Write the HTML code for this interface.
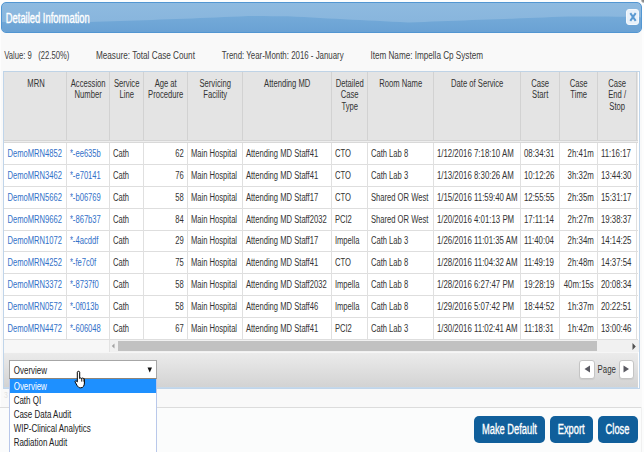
<!DOCTYPE html>
<html><head><meta charset="utf-8"><style>
html,body{margin:0;padding:0;}
body{width:644px;height:452px;overflow:hidden;position:relative;font-family:'Liberation Sans', sans-serif;background:#f9f9f9}
div{position:absolute;box-sizing:content-box}
.t{white-space:nowrap}
</style></head><body>
<div style="left:0px;top:0px;width:644px;height:452px;background:#fdfdfd"></div>
<div style="left:1px;top:20px;width:640.5px;height:387px;background:#f9f9f9"></div>
<div style="left:0px;top:408px;width:644px;height:44px;background:#fbfcfc"></div>
<div style="left:0px;top:407px;width:641px;height:1px;background:#dcdcdc"></div>
<div style="left:640px;top:-4px;width:8px;height:8px;background:radial-gradient(circle at 50% 50%,rgba(110,110,110,.9) 0,rgba(120,120,120,.8) 2px,rgba(150,150,150,0) 3.5px)"></div>
<div style="left:639px;top:447px;width:10px;height:10px;background:radial-gradient(circle at 100% 100%,rgba(120,120,120,.8) 0,rgba(120,120,120,.6) 2px,rgba(150,150,150,0) 4px)"></div>
<div style="left:641px;top:407px;width:1px;height:45px;background:#f0f0f0"></div>
<div style="left:1px;top:2px;width:639px;height:29px;border:1px solid #5296d2;border-radius:5px;overflow:hidden;background:linear-gradient(#8ebae0,#85b3db)"><svg style="position:absolute;left:0;top:0" width="639" height="29"><defs><linearGradient id="gb" x1="0" y1="0" x2="0" y2="1"><stop offset="0" stop-color="#74aad8"/><stop offset="1" stop-color="#6aa2d4"/></linearGradient></defs><path d="M-2 19.00 L-2 19.00 L6 19.00 L14 19.00 L22 19.00 L30 19.00 L38 19.00 L46 19.00 L54 19.00 L62 19.00 L70 19.00 L78 19.00 L86 19.00 L94 18.79 L102 18.51 L110 18.23 L118 17.95 L126 17.67 L134 17.41 L142 17.14 L150 16.89 L158 16.62 L166 16.37 L174 16.05 L182 15.72 L190 15.39 L198 15.06 L206 14.73 L214 14.40 L222 14.07 L230 13.74 L238 13.41 L246 13.08 L254 13.05 L262 13.11 L270 13.16 L278 13.23 L286 13.29 L294 13.63 L302 14.07 L310 14.51 L318 14.95 L326 15.39 L334 15.81 L342 16.22 L350 16.63 L358 17.04 L366 17.45 L374 17.86 L382 18.27 L390 18.68 L398 19.09 L406 19.50 L414 19.32 L422 18.95 L430 18.57 L438 18.20 L446 17.93 L454 17.66 L462 17.38 L470 17.11 L478 16.84 L486 16.57 L494 16.27 L502 15.96 L510 15.65 L518 15.34 L526 15.03 L534 14.72 L542 14.41 L550 14.10 L558 13.79 L566 13.48 L574 13.42 L582 13.45 L590 13.47 L598 13.50 L606 13.59 L614 13.68 L622 13.77 L630 13.86 L638 13.95 L660 29 L-2 29Z" fill="url(#gb)"/></svg></div>
<div class="t" style="left:0;text-align:left;top:8.82px;font-size:13.8px;line-height:20px;color:#fff;transform:translateX(5.80px) scaleX(0.68);transform-origin:0 0;-webkit-text-stroke:0.35px #fff">Detailed Information</div>
<div style="left:626px;top:9px;width:11px;height:14px;border:1px solid #f4f8fc;border-radius:3px;background:#e8f1fa"></div>
<svg style="position:absolute;left:628.5px;top:12px" width="8" height="10" viewBox="0 0 8 10"><path d="M1.3 1.2L6.7 8.8M6.7 1.2L1.3 8.8" stroke="#5b9ad2" stroke-width="2"/></svg>
<div class="t" style="left:0;text-align:left;top:45.63px;font-size:10.3px;line-height:20px;color:#3c3c3c;transform:translateX(4.20px) scaleX(0.745);transform-origin:0 0;">Value: 9</div>
<div class="t" style="left:0;text-align:left;top:45.63px;font-size:10.3px;line-height:20px;color:#3c3c3c;transform:translateX(38.30px) scaleX(0.745);transform-origin:0 0;">(22.50%)</div>
<div class="t" style="left:0;text-align:left;top:45.63px;font-size:10.3px;line-height:20px;color:#3c3c3c;transform:translateX(95.90px) scaleX(0.795);transform-origin:0 0;">Measure: Total Case Count</div>
<div class="t" style="left:0;text-align:left;top:45.63px;font-size:10.3px;line-height:20px;color:#3c3c3c;transform:translateX(221.80px) scaleX(0.765);transform-origin:0 0;">Trend: Year-Month: 2016 - January</div>
<div class="t" style="left:0;text-align:left;top:45.63px;font-size:10.3px;line-height:20px;color:#3c3c3c;transform:translateX(370.40px) scaleX(0.79);transform-origin:0 0;">Item Name: Impella Cp System</div>
<div style="left:3px;top:71px;width:635px;height:316px;border:1px solid #c0d5ea;border-top-color:#bfd3e6;background:#fff"></div>
<div style="left:4px;top:72px;width:634px;height:68px;background:#e4e4e4"></div>
<div style="left:66px;top:72px;width:1px;height:68px;background:#d2d2d2"></div>
<div style="left:109px;top:72px;width:1px;height:68px;background:#d2d2d2"></div>
<div style="left:143px;top:72px;width:1px;height:68px;background:#d2d2d2"></div>
<div style="left:187px;top:72px;width:1px;height:68px;background:#d2d2d2"></div>
<div style="left:242px;top:72px;width:1px;height:68px;background:#d2d2d2"></div>
<div style="left:331px;top:72px;width:1px;height:68px;background:#d2d2d2"></div>
<div style="left:367px;top:72px;width:1px;height:68px;background:#d2d2d2"></div>
<div style="left:433px;top:72px;width:1px;height:68px;background:#d2d2d2"></div>
<div style="left:520px;top:72px;width:1px;height:68px;background:#d2d2d2"></div>
<div style="left:559px;top:72px;width:1px;height:68px;background:#d2d2d2"></div>
<div style="left:597px;top:72px;width:1px;height:68px;background:#d2d2d2"></div>
<div style="left:636px;top:72px;width:1px;height:68px;background:#d2d2d2"></div>
<div style="left:4px;top:140px;width:634px;height:1px;background:#d5d5d5"></div>
<div style="left:4px;top:141px;width:634px;height:1px;background:#eeeeee"></div>
<div style="left:4px;top:142px;width:634px;height:1px;background:#d9d9d9"></div>
<div style="left:4px;top:164px;width:634px;height:1px;background:#dedede"></div>
<div style="left:4px;top:186px;width:634px;height:1px;background:#dedede"></div>
<div style="left:4px;top:208px;width:634px;height:1px;background:#dedede"></div>
<div style="left:4px;top:230px;width:634px;height:1px;background:#dedede"></div>
<div style="left:4px;top:251px;width:634px;height:1px;background:#dedede"></div>
<div style="left:4px;top:273px;width:634px;height:1px;background:#dedede"></div>
<div style="left:4px;top:295px;width:634px;height:1px;background:#dedede"></div>
<div style="left:4px;top:317px;width:634px;height:1px;background:#dedede"></div>
<div style="left:4px;top:339px;width:634px;height:1px;background:#dedede"></div>
<div style="left:66px;top:143px;width:1px;height:196px;background:#e0e0e0"></div>
<div style="left:109px;top:143px;width:1px;height:196px;background:#e0e0e0"></div>
<div style="left:143px;top:143px;width:1px;height:196px;background:#e0e0e0"></div>
<div style="left:187px;top:143px;width:1px;height:196px;background:#e0e0e0"></div>
<div style="left:242px;top:143px;width:1px;height:196px;background:#e0e0e0"></div>
<div style="left:331px;top:143px;width:1px;height:196px;background:#e0e0e0"></div>
<div style="left:367px;top:143px;width:1px;height:196px;background:#e0e0e0"></div>
<div style="left:433px;top:143px;width:1px;height:196px;background:#e0e0e0"></div>
<div style="left:520px;top:143px;width:1px;height:196px;background:#e0e0e0"></div>
<div style="left:559px;top:143px;width:1px;height:196px;background:#e0e0e0"></div>
<div style="left:597px;top:143px;width:1px;height:196px;background:#e0e0e0"></div>
<div style="left:636px;top:143px;width:1px;height:196px;background:#e0e0e0"></div>
<div class="t" style="left:0;width:400px;text-align:center;top:73.53px;font-size:10px;line-height:20px;color:#333;transform:translateX(-164.00px) scaleX(0.765);transform-origin:50% 0;">MRN</div>
<div class="t" style="left:0;width:400px;text-align:center;top:73.53px;font-size:10px;line-height:20px;color:#333;transform:translateX(-111.80px) scaleX(0.765);transform-origin:50% 0;">Accession</div>
<div class="t" style="left:0;width:400px;text-align:center;top:85.23px;font-size:10px;line-height:20px;color:#333;transform:translateX(-111.80px) scaleX(0.765);transform-origin:50% 0;">Number</div>
<div class="t" style="left:0;width:400px;text-align:center;top:73.53px;font-size:10px;line-height:20px;color:#333;transform:translateX(-73.30px) scaleX(0.765);transform-origin:50% 0;">Service</div>
<div class="t" style="left:0;width:400px;text-align:center;top:85.23px;font-size:10px;line-height:20px;color:#333;transform:translateX(-73.30px) scaleX(0.765);transform-origin:50% 0;">Line</div>
<div class="t" style="left:0;width:400px;text-align:center;top:73.53px;font-size:10px;line-height:20px;color:#333;transform:translateX(-34.30px) scaleX(0.765);transform-origin:50% 0;">Age at</div>
<div class="t" style="left:0;width:400px;text-align:center;top:85.23px;font-size:10px;line-height:20px;color:#333;transform:translateX(-34.30px) scaleX(0.765);transform-origin:50% 0;">Procedure</div>
<div class="t" style="left:0;width:400px;text-align:center;top:73.53px;font-size:10px;line-height:20px;color:#333;transform:translateX(15.20px) scaleX(0.765);transform-origin:50% 0;">Servicing</div>
<div class="t" style="left:0;width:400px;text-align:center;top:85.23px;font-size:10px;line-height:20px;color:#333;transform:translateX(15.20px) scaleX(0.765);transform-origin:50% 0;">Facility</div>
<div class="t" style="left:0;width:400px;text-align:center;top:73.53px;font-size:10px;line-height:20px;color:#333;transform:translateX(87.20px) scaleX(0.765);transform-origin:50% 0;">Attending MD</div>
<div class="t" style="left:0;width:400px;text-align:center;top:73.53px;font-size:10px;line-height:20px;color:#333;transform:translateX(149.70px) scaleX(0.765);transform-origin:50% 0;">Detailed</div>
<div class="t" style="left:0;width:400px;text-align:center;top:85.23px;font-size:10px;line-height:20px;color:#333;transform:translateX(149.70px) scaleX(0.765);transform-origin:50% 0;">Case</div>
<div class="t" style="left:0;width:400px;text-align:center;top:96.94px;font-size:10px;line-height:20px;color:#333;transform:translateX(149.70px) scaleX(0.765);transform-origin:50% 0;">Type</div>
<div class="t" style="left:0;width:400px;text-align:center;top:73.53px;font-size:10px;line-height:20px;color:#333;transform:translateX(200.70px) scaleX(0.765);transform-origin:50% 0;">Room Name</div>
<div class="t" style="left:0;width:400px;text-align:center;top:73.53px;font-size:10px;line-height:20px;color:#333;transform:translateX(277.20px) scaleX(0.765);transform-origin:50% 0;">Date of Service</div>
<div class="t" style="left:0;width:400px;text-align:center;top:73.53px;font-size:10px;line-height:20px;color:#333;transform:translateX(340.20px) scaleX(0.765);transform-origin:50% 0;">Case</div>
<div class="t" style="left:0;width:400px;text-align:center;top:85.23px;font-size:10px;line-height:20px;color:#333;transform:translateX(340.20px) scaleX(0.765);transform-origin:50% 0;">Start</div>
<div class="t" style="left:0;width:400px;text-align:center;top:73.53px;font-size:10px;line-height:20px;color:#333;transform:translateX(378.70px) scaleX(0.765);transform-origin:50% 0;">Case</div>
<div class="t" style="left:0;width:400px;text-align:center;top:85.23px;font-size:10px;line-height:20px;color:#333;transform:translateX(378.70px) scaleX(0.765);transform-origin:50% 0;">Time</div>
<div class="t" style="left:0;width:400px;text-align:center;top:73.53px;font-size:10px;line-height:20px;color:#333;transform:translateX(417.20px) scaleX(0.765);transform-origin:50% 0;">Case</div>
<div class="t" style="left:0;width:400px;text-align:center;top:85.23px;font-size:10px;line-height:20px;color:#333;transform:translateX(417.20px) scaleX(0.765);transform-origin:50% 0;">End /</div>
<div class="t" style="left:0;width:400px;text-align:center;top:96.94px;font-size:10px;line-height:20px;color:#333;transform:translateX(417.20px) scaleX(0.765);transform-origin:50% 0;">Stop</div>
<div class="t" style="left:0;text-align:left;top:143.63px;font-size:10px;line-height:20px;color:#3270c8;transform:translateX(7.40px) scaleX(0.762);transform-origin:0 0;">DemoMRN4852</div>
<div class="t" style="left:0;text-align:left;top:143.63px;font-size:10px;line-height:20px;color:#3270c8;transform:translateX(69.90px) scaleX(0.762);transform-origin:0 0;">*-ee635b</div>
<div class="t" style="left:0;text-align:left;top:143.63px;font-size:10px;line-height:20px;color:#333;transform:translateX(112.90px) scaleX(0.762);transform-origin:0 0;">Cath</div>
<div class="t" style="left:0;width:400px;text-align:right;top:143.63px;font-size:10px;line-height:20px;color:#333;transform:translateX(-216.20px) scaleX(0.762);transform-origin:100% 0;">62</div>
<div class="t" style="left:0;text-align:left;top:143.63px;font-size:10px;line-height:20px;color:#333;transform:translateX(190.90px) scaleX(0.762);transform-origin:0 0;">Main Hospital</div>
<div class="t" style="left:0;text-align:left;top:143.63px;font-size:10px;line-height:20px;color:#333;transform:translateX(245.90px) scaleX(0.762);transform-origin:0 0;">Attending MD Staff41</div>
<div class="t" style="left:0;text-align:left;top:143.63px;font-size:10px;line-height:20px;color:#333;transform:translateX(334.90px) scaleX(0.762);transform-origin:0 0;">CTO</div>
<div class="t" style="left:0;text-align:left;top:143.63px;font-size:10px;line-height:20px;color:#333;transform:translateX(370.90px) scaleX(0.762);transform-origin:0 0;">Cath Lab 8</div>
<div class="t" style="left:0;text-align:left;top:143.63px;font-size:10px;line-height:20px;color:#333;transform:translateX(436.90px) scaleX(0.785);transform-origin:0 0;">1/12/2016 7:18:10 AM</div>
<div class="t" style="left:0;text-align:left;top:143.63px;font-size:10px;line-height:20px;color:#333;transform:translateX(523.90px) scaleX(0.785);transform-origin:0 0;">08:34:31</div>
<div class="t" style="left:0;width:400px;text-align:right;top:143.63px;font-size:10px;line-height:20px;color:#333;transform:translateX(193.80px) scaleX(0.785);transform-origin:100% 0;">2h:41m</div>
<div class="t" style="left:0;text-align:left;top:143.63px;font-size:10px;line-height:20px;color:#333;transform:translateX(600.90px) scaleX(0.785);transform-origin:0 0;">11:16:17</div>
<div class="t" style="left:0;text-align:left;top:165.63px;font-size:10px;line-height:20px;color:#3270c8;transform:translateX(7.40px) scaleX(0.762);transform-origin:0 0;">DemoMRN3462</div>
<div class="t" style="left:0;text-align:left;top:165.63px;font-size:10px;line-height:20px;color:#3270c8;transform:translateX(69.90px) scaleX(0.762);transform-origin:0 0;">*-e70141</div>
<div class="t" style="left:0;text-align:left;top:165.63px;font-size:10px;line-height:20px;color:#333;transform:translateX(112.90px) scaleX(0.762);transform-origin:0 0;">Cath</div>
<div class="t" style="left:0;width:400px;text-align:right;top:165.63px;font-size:10px;line-height:20px;color:#333;transform:translateX(-216.20px) scaleX(0.762);transform-origin:100% 0;">76</div>
<div class="t" style="left:0;text-align:left;top:165.63px;font-size:10px;line-height:20px;color:#333;transform:translateX(190.90px) scaleX(0.762);transform-origin:0 0;">Main Hospital</div>
<div class="t" style="left:0;text-align:left;top:165.63px;font-size:10px;line-height:20px;color:#333;transform:translateX(245.90px) scaleX(0.762);transform-origin:0 0;">Attending MD Staff41</div>
<div class="t" style="left:0;text-align:left;top:165.63px;font-size:10px;line-height:20px;color:#333;transform:translateX(334.90px) scaleX(0.762);transform-origin:0 0;">CTO</div>
<div class="t" style="left:0;text-align:left;top:165.63px;font-size:10px;line-height:20px;color:#333;transform:translateX(370.90px) scaleX(0.762);transform-origin:0 0;">Cath Lab 3</div>
<div class="t" style="left:0;text-align:left;top:165.63px;font-size:10px;line-height:20px;color:#333;transform:translateX(436.90px) scaleX(0.785);transform-origin:0 0;">1/13/2016 8:30:26 AM</div>
<div class="t" style="left:0;text-align:left;top:165.63px;font-size:10px;line-height:20px;color:#333;transform:translateX(523.90px) scaleX(0.785);transform-origin:0 0;">10:12:26</div>
<div class="t" style="left:0;width:400px;text-align:right;top:165.63px;font-size:10px;line-height:20px;color:#333;transform:translateX(193.80px) scaleX(0.785);transform-origin:100% 0;">3h:32m</div>
<div class="t" style="left:0;text-align:left;top:165.63px;font-size:10px;line-height:20px;color:#333;transform:translateX(600.90px) scaleX(0.785);transform-origin:0 0;">13:44:30</div>
<div class="t" style="left:0;text-align:left;top:187.63px;font-size:10px;line-height:20px;color:#3270c8;transform:translateX(7.40px) scaleX(0.762);transform-origin:0 0;">DemoMRN5662</div>
<div class="t" style="left:0;text-align:left;top:187.63px;font-size:10px;line-height:20px;color:#3270c8;transform:translateX(69.90px) scaleX(0.762);transform-origin:0 0;">*-b06769</div>
<div class="t" style="left:0;text-align:left;top:187.63px;font-size:10px;line-height:20px;color:#333;transform:translateX(112.90px) scaleX(0.762);transform-origin:0 0;">Cath</div>
<div class="t" style="left:0;width:400px;text-align:right;top:187.63px;font-size:10px;line-height:20px;color:#333;transform:translateX(-216.20px) scaleX(0.762);transform-origin:100% 0;">58</div>
<div class="t" style="left:0;text-align:left;top:187.63px;font-size:10px;line-height:20px;color:#333;transform:translateX(190.90px) scaleX(0.762);transform-origin:0 0;">Main Hospital</div>
<div class="t" style="left:0;text-align:left;top:187.63px;font-size:10px;line-height:20px;color:#333;transform:translateX(245.90px) scaleX(0.762);transform-origin:0 0;">Attending MD Staff17</div>
<div class="t" style="left:0;text-align:left;top:187.63px;font-size:10px;line-height:20px;color:#333;transform:translateX(334.90px) scaleX(0.762);transform-origin:0 0;">CTO</div>
<div class="t" style="left:0;text-align:left;top:187.63px;font-size:10px;line-height:20px;color:#333;transform:translateX(370.90px) scaleX(0.762);transform-origin:0 0;">Shared OR West</div>
<div class="t" style="left:0;text-align:left;top:187.63px;font-size:10px;line-height:20px;color:#333;transform:translateX(436.90px) scaleX(0.785);transform-origin:0 0;">1/15/2016 11:59:40 AM</div>
<div class="t" style="left:0;text-align:left;top:187.63px;font-size:10px;line-height:20px;color:#333;transform:translateX(523.90px) scaleX(0.785);transform-origin:0 0;">12:55:55</div>
<div class="t" style="left:0;width:400px;text-align:right;top:187.63px;font-size:10px;line-height:20px;color:#333;transform:translateX(193.80px) scaleX(0.785);transform-origin:100% 0;">2h:35m</div>
<div class="t" style="left:0;text-align:left;top:187.63px;font-size:10px;line-height:20px;color:#333;transform:translateX(600.90px) scaleX(0.785);transform-origin:0 0;">15:31:17</div>
<div class="t" style="left:0;text-align:left;top:209.63px;font-size:10px;line-height:20px;color:#3270c8;transform:translateX(7.40px) scaleX(0.762);transform-origin:0 0;">DemoMRN9662</div>
<div class="t" style="left:0;text-align:left;top:209.63px;font-size:10px;line-height:20px;color:#3270c8;transform:translateX(69.90px) scaleX(0.762);transform-origin:0 0;">*-867b37</div>
<div class="t" style="left:0;text-align:left;top:209.63px;font-size:10px;line-height:20px;color:#333;transform:translateX(112.90px) scaleX(0.762);transform-origin:0 0;">Cath</div>
<div class="t" style="left:0;width:400px;text-align:right;top:209.63px;font-size:10px;line-height:20px;color:#333;transform:translateX(-216.20px) scaleX(0.762);transform-origin:100% 0;">84</div>
<div class="t" style="left:0;text-align:left;top:209.63px;font-size:10px;line-height:20px;color:#333;transform:translateX(190.90px) scaleX(0.762);transform-origin:0 0;">Main Hospital</div>
<div class="t" style="left:0;text-align:left;top:209.63px;font-size:10px;line-height:20px;color:#333;transform:translateX(245.90px) scaleX(0.762);transform-origin:0 0;">Attending MD Staff2032</div>
<div class="t" style="left:0;text-align:left;top:209.63px;font-size:10px;line-height:20px;color:#333;transform:translateX(334.90px) scaleX(0.762);transform-origin:0 0;">PCI2</div>
<div class="t" style="left:0;text-align:left;top:209.63px;font-size:10px;line-height:20px;color:#333;transform:translateX(370.90px) scaleX(0.762);transform-origin:0 0;">Shared OR West</div>
<div class="t" style="left:0;text-align:left;top:209.63px;font-size:10px;line-height:20px;color:#333;transform:translateX(436.90px) scaleX(0.785);transform-origin:0 0;">1/20/2016 4:01:13 PM</div>
<div class="t" style="left:0;text-align:left;top:209.63px;font-size:10px;line-height:20px;color:#333;transform:translateX(523.90px) scaleX(0.785);transform-origin:0 0;">17:11:14</div>
<div class="t" style="left:0;width:400px;text-align:right;top:209.63px;font-size:10px;line-height:20px;color:#333;transform:translateX(193.80px) scaleX(0.785);transform-origin:100% 0;">2h:27m</div>
<div class="t" style="left:0;text-align:left;top:209.63px;font-size:10px;line-height:20px;color:#333;transform:translateX(600.90px) scaleX(0.785);transform-origin:0 0;">19:38:37</div>
<div class="t" style="left:0;text-align:left;top:231.13px;font-size:10px;line-height:20px;color:#3270c8;transform:translateX(7.40px) scaleX(0.762);transform-origin:0 0;">DemoMRN1072</div>
<div class="t" style="left:0;text-align:left;top:231.13px;font-size:10px;line-height:20px;color:#3270c8;transform:translateX(69.90px) scaleX(0.762);transform-origin:0 0;">*-4acddf</div>
<div class="t" style="left:0;text-align:left;top:231.13px;font-size:10px;line-height:20px;color:#333;transform:translateX(112.90px) scaleX(0.762);transform-origin:0 0;">Cath</div>
<div class="t" style="left:0;width:400px;text-align:right;top:231.13px;font-size:10px;line-height:20px;color:#333;transform:translateX(-216.20px) scaleX(0.762);transform-origin:100% 0;">29</div>
<div class="t" style="left:0;text-align:left;top:231.13px;font-size:10px;line-height:20px;color:#333;transform:translateX(190.90px) scaleX(0.762);transform-origin:0 0;">Main Hospital</div>
<div class="t" style="left:0;text-align:left;top:231.13px;font-size:10px;line-height:20px;color:#333;transform:translateX(245.90px) scaleX(0.762);transform-origin:0 0;">Attending MD Staff17</div>
<div class="t" style="left:0;text-align:left;top:231.13px;font-size:10px;line-height:20px;color:#333;transform:translateX(334.90px) scaleX(0.762);transform-origin:0 0;">Impella</div>
<div class="t" style="left:0;text-align:left;top:231.13px;font-size:10px;line-height:20px;color:#333;transform:translateX(370.90px) scaleX(0.762);transform-origin:0 0;">Cath Lab 3</div>
<div class="t" style="left:0;text-align:left;top:231.13px;font-size:10px;line-height:20px;color:#333;transform:translateX(436.90px) scaleX(0.785);transform-origin:0 0;">1/26/2016 11:01:35 AM</div>
<div class="t" style="left:0;text-align:left;top:231.13px;font-size:10px;line-height:20px;color:#333;transform:translateX(523.90px) scaleX(0.785);transform-origin:0 0;">11:40:04</div>
<div class="t" style="left:0;width:400px;text-align:right;top:231.13px;font-size:10px;line-height:20px;color:#333;transform:translateX(193.80px) scaleX(0.785);transform-origin:100% 0;">2h:34m</div>
<div class="t" style="left:0;text-align:left;top:231.13px;font-size:10px;line-height:20px;color:#333;transform:translateX(600.90px) scaleX(0.785);transform-origin:0 0;">14:14:25</div>
<div class="t" style="left:0;text-align:left;top:252.64px;font-size:10px;line-height:20px;color:#3270c8;transform:translateX(7.40px) scaleX(0.762);transform-origin:0 0;">DemoMRN4252</div>
<div class="t" style="left:0;text-align:left;top:252.64px;font-size:10px;line-height:20px;color:#3270c8;transform:translateX(69.90px) scaleX(0.762);transform-origin:0 0;">*-fe7c0f</div>
<div class="t" style="left:0;text-align:left;top:252.64px;font-size:10px;line-height:20px;color:#333;transform:translateX(112.90px) scaleX(0.762);transform-origin:0 0;">Cath</div>
<div class="t" style="left:0;width:400px;text-align:right;top:252.64px;font-size:10px;line-height:20px;color:#333;transform:translateX(-216.20px) scaleX(0.762);transform-origin:100% 0;">75</div>
<div class="t" style="left:0;text-align:left;top:252.64px;font-size:10px;line-height:20px;color:#333;transform:translateX(190.90px) scaleX(0.762);transform-origin:0 0;">Main Hospital</div>
<div class="t" style="left:0;text-align:left;top:252.64px;font-size:10px;line-height:20px;color:#333;transform:translateX(245.90px) scaleX(0.762);transform-origin:0 0;">Attending MD Staff41</div>
<div class="t" style="left:0;text-align:left;top:252.64px;font-size:10px;line-height:20px;color:#333;transform:translateX(334.90px) scaleX(0.762);transform-origin:0 0;">CTO</div>
<div class="t" style="left:0;text-align:left;top:252.64px;font-size:10px;line-height:20px;color:#333;transform:translateX(370.90px) scaleX(0.762);transform-origin:0 0;">Cath Lab 8</div>
<div class="t" style="left:0;text-align:left;top:252.64px;font-size:10px;line-height:20px;color:#333;transform:translateX(436.90px) scaleX(0.785);transform-origin:0 0;">1/28/2016 11:04:32 AM</div>
<div class="t" style="left:0;text-align:left;top:252.64px;font-size:10px;line-height:20px;color:#333;transform:translateX(523.90px) scaleX(0.785);transform-origin:0 0;">11:49:19</div>
<div class="t" style="left:0;width:400px;text-align:right;top:252.64px;font-size:10px;line-height:20px;color:#333;transform:translateX(193.80px) scaleX(0.785);transform-origin:100% 0;">2h:48m</div>
<div class="t" style="left:0;text-align:left;top:252.64px;font-size:10px;line-height:20px;color:#333;transform:translateX(600.90px) scaleX(0.785);transform-origin:0 0;">14:37:54</div>
<div class="t" style="left:0;text-align:left;top:274.64px;font-size:10px;line-height:20px;color:#3270c8;transform:translateX(7.40px) scaleX(0.762);transform-origin:0 0;">DemoMRN3372</div>
<div class="t" style="left:0;text-align:left;top:274.64px;font-size:10px;line-height:20px;color:#3270c8;transform:translateX(69.90px) scaleX(0.762);transform-origin:0 0;">*-8737f0</div>
<div class="t" style="left:0;text-align:left;top:274.64px;font-size:10px;line-height:20px;color:#333;transform:translateX(112.90px) scaleX(0.762);transform-origin:0 0;">Cath</div>
<div class="t" style="left:0;width:400px;text-align:right;top:274.64px;font-size:10px;line-height:20px;color:#333;transform:translateX(-216.20px) scaleX(0.762);transform-origin:100% 0;">58</div>
<div class="t" style="left:0;text-align:left;top:274.64px;font-size:10px;line-height:20px;color:#333;transform:translateX(190.90px) scaleX(0.762);transform-origin:0 0;">Main Hospital</div>
<div class="t" style="left:0;text-align:left;top:274.64px;font-size:10px;line-height:20px;color:#333;transform:translateX(245.90px) scaleX(0.762);transform-origin:0 0;">Attending MD Staff2032</div>
<div class="t" style="left:0;text-align:left;top:274.64px;font-size:10px;line-height:20px;color:#333;transform:translateX(334.90px) scaleX(0.762);transform-origin:0 0;">Impella</div>
<div class="t" style="left:0;text-align:left;top:274.64px;font-size:10px;line-height:20px;color:#333;transform:translateX(370.90px) scaleX(0.762);transform-origin:0 0;">Cath Lab 8</div>
<div class="t" style="left:0;text-align:left;top:274.64px;font-size:10px;line-height:20px;color:#333;transform:translateX(436.90px) scaleX(0.785);transform-origin:0 0;">1/28/2016 6:27:47 PM</div>
<div class="t" style="left:0;text-align:left;top:274.64px;font-size:10px;line-height:20px;color:#333;transform:translateX(523.90px) scaleX(0.785);transform-origin:0 0;">19:28:19</div>
<div class="t" style="left:0;width:400px;text-align:right;top:274.64px;font-size:10px;line-height:20px;color:#333;transform:translateX(193.80px) scaleX(0.785);transform-origin:100% 0;">40m:15s</div>
<div class="t" style="left:0;text-align:left;top:274.64px;font-size:10px;line-height:20px;color:#333;transform:translateX(600.90px) scaleX(0.785);transform-origin:0 0;">20:08:34</div>
<div class="t" style="left:0;text-align:left;top:296.64px;font-size:10px;line-height:20px;color:#3270c8;transform:translateX(7.40px) scaleX(0.762);transform-origin:0 0;">DemoMRN0572</div>
<div class="t" style="left:0;text-align:left;top:296.64px;font-size:10px;line-height:20px;color:#3270c8;transform:translateX(69.90px) scaleX(0.762);transform-origin:0 0;">*-0f013b</div>
<div class="t" style="left:0;text-align:left;top:296.64px;font-size:10px;line-height:20px;color:#333;transform:translateX(112.90px) scaleX(0.762);transform-origin:0 0;">Cath</div>
<div class="t" style="left:0;width:400px;text-align:right;top:296.64px;font-size:10px;line-height:20px;color:#333;transform:translateX(-216.20px) scaleX(0.762);transform-origin:100% 0;">58</div>
<div class="t" style="left:0;text-align:left;top:296.64px;font-size:10px;line-height:20px;color:#333;transform:translateX(190.90px) scaleX(0.762);transform-origin:0 0;">Main Hospital</div>
<div class="t" style="left:0;text-align:left;top:296.64px;font-size:10px;line-height:20px;color:#333;transform:translateX(245.90px) scaleX(0.762);transform-origin:0 0;">Attending MD Staff46</div>
<div class="t" style="left:0;text-align:left;top:296.64px;font-size:10px;line-height:20px;color:#333;transform:translateX(334.90px) scaleX(0.762);transform-origin:0 0;">Impella</div>
<div class="t" style="left:0;text-align:left;top:296.64px;font-size:10px;line-height:20px;color:#333;transform:translateX(370.90px) scaleX(0.762);transform-origin:0 0;">Cath Lab 8</div>
<div class="t" style="left:0;text-align:left;top:296.64px;font-size:10px;line-height:20px;color:#333;transform:translateX(436.90px) scaleX(0.785);transform-origin:0 0;">1/29/2016 5:07:42 PM</div>
<div class="t" style="left:0;text-align:left;top:296.64px;font-size:10px;line-height:20px;color:#333;transform:translateX(523.90px) scaleX(0.785);transform-origin:0 0;">18:44:52</div>
<div class="t" style="left:0;width:400px;text-align:right;top:296.64px;font-size:10px;line-height:20px;color:#333;transform:translateX(193.80px) scaleX(0.785);transform-origin:100% 0;">1h:37m</div>
<div class="t" style="left:0;text-align:left;top:296.64px;font-size:10px;line-height:20px;color:#333;transform:translateX(600.90px) scaleX(0.785);transform-origin:0 0;">20:22:51</div>
<div class="t" style="left:0;text-align:left;top:318.64px;font-size:10px;line-height:20px;color:#3270c8;transform:translateX(7.40px) scaleX(0.762);transform-origin:0 0;">DemoMRN4472</div>
<div class="t" style="left:0;text-align:left;top:318.64px;font-size:10px;line-height:20px;color:#3270c8;transform:translateX(69.90px) scaleX(0.762);transform-origin:0 0;">*-606048</div>
<div class="t" style="left:0;text-align:left;top:318.64px;font-size:10px;line-height:20px;color:#333;transform:translateX(112.90px) scaleX(0.762);transform-origin:0 0;">Cath</div>
<div class="t" style="left:0;width:400px;text-align:right;top:318.64px;font-size:10px;line-height:20px;color:#333;transform:translateX(-216.20px) scaleX(0.762);transform-origin:100% 0;">67</div>
<div class="t" style="left:0;text-align:left;top:318.64px;font-size:10px;line-height:20px;color:#333;transform:translateX(190.90px) scaleX(0.762);transform-origin:0 0;">Main Hospital</div>
<div class="t" style="left:0;text-align:left;top:318.64px;font-size:10px;line-height:20px;color:#333;transform:translateX(245.90px) scaleX(0.762);transform-origin:0 0;">Attending MD Staff41</div>
<div class="t" style="left:0;text-align:left;top:318.64px;font-size:10px;line-height:20px;color:#333;transform:translateX(334.90px) scaleX(0.762);transform-origin:0 0;">PCI2</div>
<div class="t" style="left:0;text-align:left;top:318.64px;font-size:10px;line-height:20px;color:#333;transform:translateX(370.90px) scaleX(0.762);transform-origin:0 0;">Cath Lab 3</div>
<div class="t" style="left:0;text-align:left;top:318.64px;font-size:10px;line-height:20px;color:#333;transform:translateX(436.90px) scaleX(0.785);transform-origin:0 0;">1/30/2016 11:02:41 AM</div>
<div class="t" style="left:0;text-align:left;top:318.64px;font-size:10px;line-height:20px;color:#333;transform:translateX(523.90px) scaleX(0.785);transform-origin:0 0;">11:18:31</div>
<div class="t" style="left:0;width:400px;text-align:right;top:318.64px;font-size:10px;line-height:20px;color:#333;transform:translateX(193.80px) scaleX(0.785);transform-origin:100% 0;">1h:42m</div>
<div class="t" style="left:0;text-align:left;top:318.64px;font-size:10px;line-height:20px;color:#333;transform:translateX(600.90px) scaleX(0.785);transform-origin:0 0;">13:00:46</div>
<div style="left:4px;top:340px;width:105px;height:12px;background:#f7f7f7"></div>
<div style="left:109px;top:340px;width:1px;height:12px;background:#e3e3e3"></div>
<div style="left:110px;top:340px;width:529px;height:12px;background:#f1f1f1"></div>
<div style="left:118px;top:341px;width:479px;height:10px;background:#c1c1c1"></div>
<svg style="position:absolute;left:111px;top:343px" width="5" height="6"><path d="M3.5 0.5L0.8 3L3.5 5.5Z" fill="#a3a3a3"/></svg>
<svg style="position:absolute;left:632px;top:343px" width="5" height="7"><path d="M0.5 0L3.8 3.5L0.5 7Z" fill="#505050"/></svg>
<div style="left:4px;top:352px;width:634px;height:35px;background:linear-gradient(#f6f6f6 0,#f6f6f6 1px,#ebebeb 1px,#d3d3d3);border-bottom:1px solid #c5d8ea"></div>
<div style="left:9px;top:360px;width:146px;height:17px;background:#fff;border:1px solid #a6a6a6;border-bottom-color:#8e8478"></div>
<div class="t" style="left:0;text-align:left;top:361.43px;font-size:10.3px;line-height:20px;color:#222;transform:translateX(13.80px) scaleX(0.775);transform-origin:0 0;">Overview</div>
<svg style="position:absolute;left:147px;top:367px" width="6" height="6"><path d="M0.5 0.5H5L2.75 5.5Z" fill="#111"/></svg>
<div style="left:579px;top:360px;width:13.5px;height:17px;background:#fff;border:1px solid #c4c4c4;border-radius:3px;box-shadow:0 1px 1px rgba(0,0,0,.06)"></div>
<div style="left:619px;top:360px;width:13px;height:17px;background:#fff;border:1px solid #c4c4c4;border-radius:3px;box-shadow:0 1px 1px rgba(0,0,0,.06)"></div>
<svg style="position:absolute;left:584px;top:365px" width="7" height="8"><path d="M6 0.5V7.5L0.5 4Z" fill="#5a5a62"/></svg>
<svg style="position:absolute;left:623px;top:365px" width="7" height="8"><path d="M0.5 0.5V7.5L6 4Z" fill="#5a5a62"/></svg>
<div class="t" style="left:0;text-align:left;top:358.96px;font-size:10.5px;line-height:20px;color:#333;transform:translateX(597.60px) scaleX(0.745);transform-origin:0 0;">Page</div>
<div class="t" style="left:0;text-align:left;top:384.55px;font-size:8.5px;line-height:20px;color:#e2e2e2;transform:translateX(4.00px) scaleX(0.8);transform-origin:0 0;">3</div>
<div style="left:474px;top:416px;width:71px;height:27px;background:#105f9b;border-radius:5px"></div>
<div style="left:550px;top:416px;width:43px;height:27px;background:#105f9b;border-radius:5px"></div>
<div style="left:597.5px;top:416px;width:40px;height:27px;background:#105f9b;border-radius:5px"></div>
<div class="t" style="left:0;text-align:left;top:419.82px;font-size:13.8px;line-height:20px;color:#fff;transform:translateX(482.00px) scaleX(0.675);transform-origin:0 0;-webkit-text-stroke:0.35px #fff">Make Default</div>
<div class="t" style="left:0;width:400px;text-align:center;top:419.82px;font-size:13.8px;line-height:20px;color:#fff;transform:translateX(371.20px) scaleX(0.675);transform-origin:50% 0;-webkit-text-stroke:0.35px #fff">Export</div>
<div class="t" style="left:0;width:400px;text-align:center;top:419.82px;font-size:13.8px;line-height:20px;color:#fff;transform:translateX(417.50px) scaleX(0.675);transform-origin:50% 0;-webkit-text-stroke:0.35px #fff">Close</div>
<div style="left:9px;top:378.5px;width:146px;height:80px;background:#fff;border:1px solid #b9c8ea;border-top:0"></div>
<div style="left:10px;top:379px;width:146px;height:14px;background:#1e90ff"></div>
<div class="t" style="left:0;text-align:left;top:376.73px;font-size:10.3px;line-height:20px;color:#fff;transform:translateX(13.70px) scaleX(0.773);transform-origin:0 0;">Overview</div>
<div class="t" style="left:0;text-align:left;top:390.73px;font-size:10.3px;line-height:20px;color:#222;transform:translateX(13.70px) scaleX(0.773);transform-origin:0 0;">Cath QI</div>
<div class="t" style="left:0;text-align:left;top:404.73px;font-size:10.3px;line-height:20px;color:#222;transform:translateX(13.70px) scaleX(0.773);transform-origin:0 0;">Case Data Audit</div>
<div class="t" style="left:0;text-align:left;top:418.73px;font-size:10.3px;line-height:20px;color:#222;transform:translateX(13.70px) scaleX(0.773);transform-origin:0 0;">WIP-Clinical Analytics</div>
<div class="t" style="left:0;text-align:left;top:432.73px;font-size:10.3px;line-height:20px;color:#222;transform:translateX(13.70px) scaleX(0.773);transform-origin:0 0;">Radiation Audit</div>
<svg style="position:absolute;left:73px;top:370px" width="14" height="20" viewBox="0 0 14 20">
<path d="M4.3 2.2c0-1.2 2.4-1.2 2.4 0V8.5c.3-.8 1.5-.8 1.8 0c.3-.7 1.4-.7 1.7.1c.4-.4 1.2-.2 1.2.5V13c0 2.7-1.3 4.8-3.5 4.8H7.3c-1.5 0-2.4-1-3.2-2.3L2.2 12.1c-.5-.9.3-1.7 1.1-1.1l1 .9V2.2z" fill="#fff" stroke="#000" stroke-width="1"/>
<path d="M8.5 8.6v3M10.2 8.7v3" stroke="#000" stroke-width=".7"/></svg>
</body></html>
